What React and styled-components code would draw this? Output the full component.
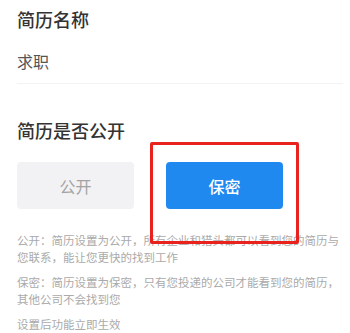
import React, { useState } from 'react';
import styled, { createGlobalStyle } from 'styled-components';

const GlobalStyle = createGlobalStyle`
  html, body {
    margin: 0;
    padding: 0;
    background: #ffffff;
  }
  body {
    font-family: "Noto Sans CJK SC", "Noto Sans", sans-serif;
  }
`;

const Page = styled.div`
  position: relative;
  width: 350px;
  height: 333px;
  overflow: hidden;
  padding: 7px 7px 0 17px;
  box-sizing: border-box;
`;

const SectionTitle = styled.h2`
  margin: ${(p) => p.$top || 0}px 0 0;
  font-size: 18px;
  line-height: 24px;
  font-weight: 500;
  color: #333333;
`;

const ValueRow = styled.div`
  margin-top: 18px;
  padding-bottom: 10px;
  font-size: 16px;
  line-height: 24px;
  color: #555555;
  border-bottom: 1px solid #f3f3f3;
`;

const ButtonRow = styled.div`
  display: flex;
  gap: 32px;
  margin-top: 20px;
`;

const Choice = styled.button`
  width: 117px;
  height: 47px;
  border: none;
  border-radius: 4px;
  font-family: inherit;
  font-size: 16px;
  font-weight: ${(p) => (p.$active ? 500 : 400)};
  color: ${(p) => (p.$active ? '#ffffff' : '#a3a3a3')};
  background: ${(p) => (p.$active ? '#2089f0' : '#f2f1f3')};
  cursor: pointer;
`;

const Notes = styled.div`
  margin-top: 23px;
  padding-right: 2px;
`;

const Note = styled.p`
  margin: 0 0 8px;
  font-size: 11.5px;
  line-height: 17px;
  color: #aaaaaa;
`;

const Highlight = styled.div`
  position: absolute;
  left: 150px;
  top: 142px;
  width: 149px;
  height: 102px;
  border: 3px solid #e8221c;
  border-radius: 2px;
  box-sizing: border-box;
  pointer-events: none;
`;

export default function App() {
  const [isPublic, setIsPublic] = useState(false);

  return (
    <Page>
      <GlobalStyle />
      <SectionTitle>简历名称</SectionTitle>
      <ValueRow>求职</ValueRow>

      <SectionTitle $top={34}>简历是否公开</SectionTitle>
      <ButtonRow>
        <Choice $active={isPublic} onClick={() => setIsPublic(true)}>公开</Choice>
        <Choice $active={!isPublic} onClick={() => setIsPublic(false)}>保密</Choice>
      </ButtonRow>

      <Notes>
        <Note>公开：简历设置为公开，所有企业和猎头都可以看到您的简历与您联系，能让您更快的找到工作</Note>
        <Note>保密：简历设置为保密，只有您投递的公司才能看到您的简历，其他公司不会找到您</Note>
        <Note>设置后功能立即生效</Note>
      </Notes>

      <Highlight />
    </Page>
  );
}
